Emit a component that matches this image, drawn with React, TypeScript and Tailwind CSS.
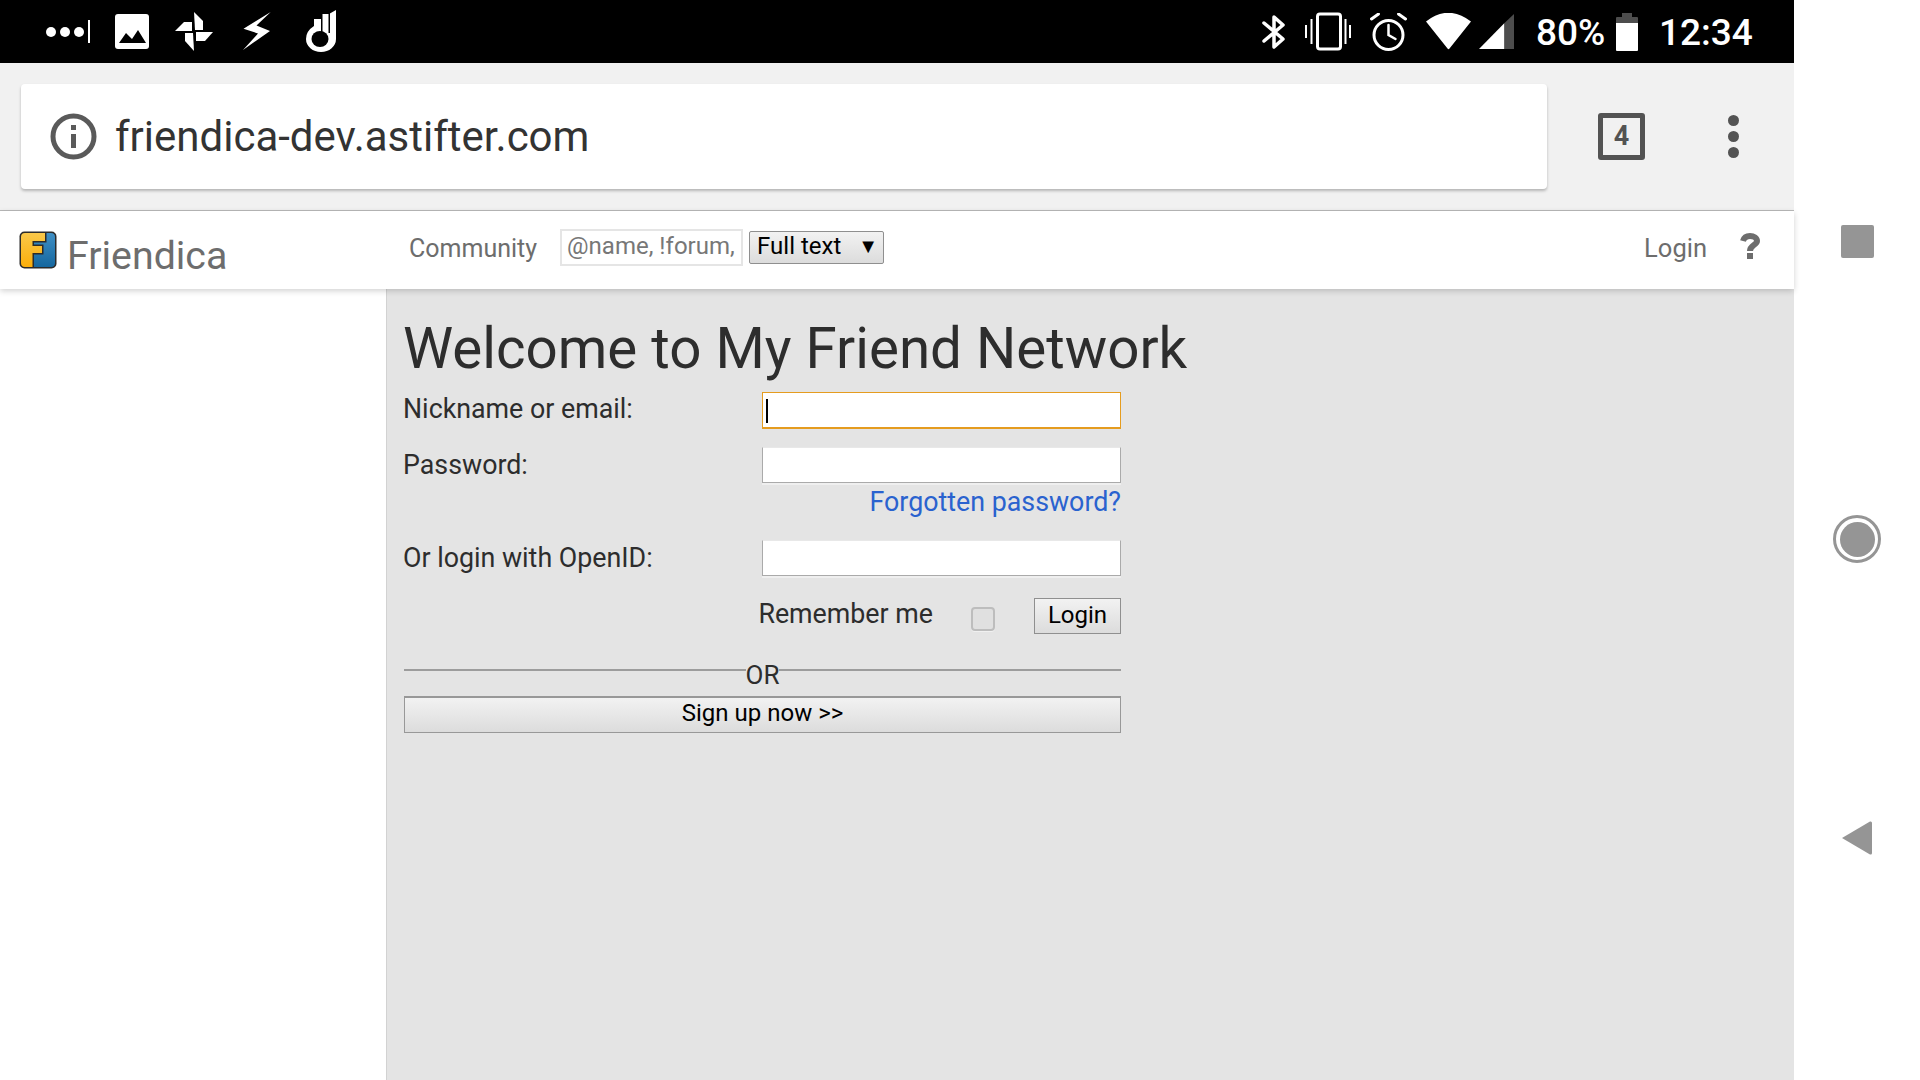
const roboto = { fontFamily: 'Roboto, "Liberation Sans", sans-serif' };

function LeftStatusIcons() {
  return (
    <div className="flex items-center pl-[46px]">
      <svg width="45" height="24" viewBox="46 20 45 24" fill="#fff">
        <circle cx="51" cy="32" r="5" />
        <circle cx="65" cy="32" r="5" />
        <circle cx="79" cy="32" r="5" />
        <rect x="88" y="20" width="2" height="23" />
      </svg>
      <svg className="ml-[24px]" width="34" height="35" viewBox="115 14 34 35">
        <rect x="115" y="14" width="34" height="35" rx="3" fill="#fff" />
        <path d="M119 43l7-10 6 6 6-9 8 13z" fill="#000" />
      </svg>
      <svg className="ml-[26px]" width="39" height="40" viewBox="175 12 39 40" fill="#fff">
        <polygon points="194,12 203,21 203,30 195,30" />
        <polygon points="175,31 184,22 192,22 192,31" />
        <polygon points="196,32 213,32 205,41 196,41" />
        <polygon points="185,33 193,33 194,51 185,41" />
      </svg>
      <svg className="ml-[29px]" width="28" height="39" viewBox="243 13 28 39" fill="#fff">
        <polygon points="270.700,13 243.500,29.700 258,34.500 243,51 270,32 256.500,26.500" />
      </svg>
      <svg className="ml-[35px]" width="31" height="43" viewBox="306 11 31 43">
        <path d="M329 15L336 11V40A15 13 0 0 1 306 40Q306 32 314 27V20H321V15Z" fill="#fff" />
        <ellipse cx="320" cy="40" rx="8.500" ry="8" fill="#000" />
        <rect x="321" y="14" width="1.500" height="20" fill="#000" />
        <rect x="328.500" y="10" width="1.500" height="24" fill="#000" />
      </svg>
    </div>
  );
}

function RightStatusIcons() {
  return (
    <div className="flex items-center pr-[37px]">
      <svg width="24" height="34" viewBox="1263 17 24 34" fill="none" stroke="#fff" strokeWidth="3.5" strokeLinecap="round" strokeLinejoin="round">
        <path d="M1265 25l19 16-9 8V19l9 8-19 16" />
      </svg>
      <svg className="ml-[18px]" width="47" height="40" viewBox="1306 12 47 40" fill="none" stroke="#fff" strokeWidth="3">
        <rect x="1319.500" y="14" width="23" height="35" rx="2.500" />
        <path d="M1308 25v13M1313.500 19v25M1347.500 19v25M1352 25v13" strokeWidth="2" />
      </svg>
      <svg className="ml-[19px]" width="38" height="38" viewBox="1372 13 38 38" fill="none" stroke="#fff" strokeWidth="3" strokeLinecap="round">
        <circle cx="1390.500" cy="35" r="14.500" />
        <path d="M1373.500 19l7-5M1400.500 14l7 5" />
        <path d="M1390.500 25v10l7 4" strokeWidth="2.500" />
      </svg>
      <svg className="ml-[18px]" width="46" height="37" viewBox="1428 13 46 37" fill="#fff">
        <path d="M1428 21.500Q1450 4 1473 21.500L1451.500 48.500Q1450.500 50 1449.500 48.500Z" />
      </svg>
      <svg className="ml-[7px]" width="36" height="36" viewBox="1481 15 36 36">
        <polygon points="1481,50 1506.500,24 1506.500,50" fill="#fff" />
        <polygon points="1506.500,24 1516,15 1516,50 1506.500,50" fill="#4d4d4d" />
      </svg>
      <span className="mt-[2px] ml-[21px] w-[67px] text-[37px] leading-none font-medium text-white" style={roboto}>80%</span>
      <div className="ml-[13px] flex w-[22px] flex-col items-center">
        <div className="h-[4px] w-[10px] bg-[#4d4d4d]" />
        <div className="h-[6px] w-full rounded-t-[1px] bg-[#4d4d4d]" />
        <div className="h-[28px] w-full rounded-b-[1px] bg-white" />
      </div>
      <span className="mt-[2px] ml-[21px] w-[98px] pr-[6px] text-[37px] leading-none font-medium text-white" style={roboto}>12:34</span>
    </div>
  );
}

function Logo() {
  return (
    <svg width="38" height="38" viewBox="0 0 38 38">
      <defs>
        <linearGradient id="logoYellow" x1="0" y1="0" x2="0" y2="1">
          <stop offset="0" stopColor="#f9c84a" />
          <stop offset="1" stopColor="#fbae0a" />
        </linearGradient>
        <linearGradient id="logoBlue" x1="0" y1="0" x2="0" y2="1">
          <stop offset="0" stopColor="#3f8fc4" />
          <stop offset="1" stopColor="#15679f" />
        </linearGradient>
      </defs>
      <rect x="0.500" y="0.500" width="37" height="37" rx="5" fill="#2b2b2b" />
      <path d="M6 2H26V10H13.500V15H23V22H13.500V36H6A4 4 0 0 1 2 32V6A4 4 0 0 1 6 2Z" fill="url(#logoYellow)" />
      <path d="M27.500 2H32A4 4 0 0 1 36 6V32A4 4 0 0 1 32 36H15V23.500H24.500V13.500H15V11.500H27.500Z" fill="url(#logoBlue)" />
    </svg>
  );
}

function Field({ label, focused }: { label: string; focused?: boolean }) {
  return (
    <div className="flex items-center">
      <label className={focused ? 'w-[359px] pb-[2px] text-[26.800px] leading-none text-[#2d2d2d]' : 'w-[359px] text-[26.800px] leading-none text-[#2d2d2d]'}>{label}</label>
      <div className="relative">
        <input
          readOnly
          className={
            focused
              ? 'block h-[37px] w-[359px] border border-b-2 border-[#e59c1f] bg-white'
              : 'block h-[36px] w-[359px] border border-[#aaaaaa] border-t-[#e8e8e8] bg-white shadow-[0_2px_0_#efefef]'
          }
        />
        {focused && <span className="absolute top-[7px] left-[4px] h-[24px] w-[2px] bg-black" />}
      </div>
    </div>
  );
}

export default function App() {
  return (
    <div className="flex h-[1080px] w-[1920px] overflow-hidden bg-white" style={roboto}>
      <div className="flex w-[1794px] flex-col">
        {/* barra de estado */}
        <div className="flex h-[63px] items-center justify-between bg-black">
          <LeftStatusIcons />
          <RightStatusIcons />
        </div>

        {/* barra del navegador */}
        <div className="flex h-[148px] items-center border-b border-[#b9b9b9] bg-[#f1f1f1] pl-[21px]">
          <div className="flex h-[105px] w-[1526px] items-center rounded-[4px] bg-white pl-[29px] shadow-[0_2px_3px_rgba(0,0,0,0.25)]">
            <svg width="47" height="47" viewBox="0 0 47 47" fill="none">
              <circle cx="23.500" cy="23.500" r="20.500" stroke="#5a5a5a" strokeWidth="5" />
              <rect x="21" y="21" width="5" height="14" fill="#5a5a5a" />
              <rect x="21" y="12" width="5" height="5" fill="#5a5a5a" />
            </svg>
            <span className="ml-[18px] text-[42px] leading-none text-[#333333]">friendica-dev.astifter.com</span>
          </div>
          <div className="ml-[51px] flex h-[47px] w-[47px] items-center justify-center rounded-[3px] border-[5px] border-[#535353] text-[27px] leading-none font-bold text-[#535353]">
            4
          </div>
          <div className="ml-[83px] flex flex-col gap-[5px]">
            <span className="h-[11px] w-[11px] rounded-full bg-[#535353]" />
            <span className="h-[11px] w-[11px] rounded-full bg-[#535353]" />
            <span className="h-[11px] w-[11px] rounded-full bg-[#535353]" />
          </div>
        </div>

        {/* navegación del sitio */}
        <div className="relative z-10 flex h-[78px] items-center bg-white pr-[34px] shadow-[0_2px_6px_rgba(0,0,0,0.18)]">
          <div className="flex w-[409px] items-center pl-[19px]">
            <Logo />
            <span className="mt-[14px] ml-[10px] text-[39.300px] leading-none text-[#6d6d6d]">Friendica</span>
          </div>
          <span className="mt-[-3px] text-[25px] leading-none text-[#6d6d6d]">Community</span>
          <div className="mt-[-5px] ml-[23px] flex h-[37px] w-[183px] items-center overflow-hidden border-2 border-[#e5e5e5] pb-[4px] pl-[5px] text-[24px] whitespace-nowrap text-[#777777]">
            @name, !forum,
          </div>
          <div className="mt-[-5px] ml-[6px] flex h-[33px] w-[135px] items-center justify-between rounded-[2px] border border-[#8f8f8f] bg-gradient-to-b from-[#f2f2f2] to-[#dcdcdc] pr-[5px] pb-[4px] pl-[7px] text-[24px] leading-none text-black">
            <span>Full text</span>
            <span className="text-[20px]">▼</span>
          </div>
          <span className="mt-[-3px] ml-auto text-[25.500px] leading-none text-[#6d6d6d]">Login</span>
          <svg className="mt-[-9px] ml-[33px]" width="20" height="26" viewBox="0 0 20 26" fill="none">
            <path d="M3 8C4 4.500 7 3 10 3C14 3 17 5 17 8C17 12 10 12 10 18" stroke="#6d6d6d" strokeWidth="6" />
            <rect x="7" y="20" width="6" height="6" fill="#6d6d6d" />
          </svg>
        </div>

        {/* contenido */}
        <div className="flex flex-1">
          <div className="w-[386px] bg-white" />
          <main className="flex-1 border-l border-[#d2d2d2] bg-[#e4e4e4] pt-[27px] pl-[16px]">
            <h1 className="text-[56.500px] leading-[66px] font-normal text-[#2d2d2d]">Welcome to My Friend Network</h1>
            <div className="flex w-[718px] flex-col">
              <div className="mt-[10px] flex flex-col gap-[18px]">
                <Field label="Nickname or email:" focused />
                <Field label="Password:" />
              </div>
              <a className="mt-[3px] self-end text-[26.800px] leading-[33px] text-[#2a62cf]">Forgotten password?</a>
              <div className="mt-[21px]">
                <Field label="Or login with OpenID:" />
              </div>
              <div className="mt-[22px] flex items-center justify-end">
                <span className="mt-[-4px] text-[26.800px] leading-none text-[#2d2d2d]">Remember me</span>
                <span className="mt-[6px] ml-[38px] h-[24px] w-[24px] rounded-[4px] border-2 border-[#bdbdbd] bg-[#e0e0e0] shadow-[0_1px_0_#f0f0f0]" />
                <button className="ml-[39px] h-[36px] w-[87px] border border-[#8f8f8f] bg-gradient-to-b from-[#f2f2f2] to-[#dcdcdc] pb-[3px] text-[24px] leading-none text-black">
                  Login
                </button>
              </div>
              <div className="mt-[26px] ml-[1px] flex items-start">
                <div className="mt-[9px] h-[2px] flex-1 bg-[#9c9c9c]" />
                <span className="mt-[1px] text-[26px] leading-[29px] text-[#2d2d2d]">OR</span>
                <div className="mt-[9px] h-[2px] flex-1 bg-[#9c9c9c]" />
              </div>
              <button className="mt-[6px] ml-[1px] h-[37px] border border-t-2 border-[#989898] bg-gradient-to-b from-[#f2f2f2] to-[#dcdcdc] pb-[5px] text-[24px] leading-none text-black">
                Sign up now &gt;&gt;
              </button>
            </div>
          </main>
        </div>
      </div>

      {/* navegación de android */}
      <div className="flex w-[126px] flex-col items-center pt-[225px]">
        <div className="h-[33px] w-[33px] rounded-[2px] bg-[#959595]" />
        <div className="mt-[257px] flex h-[48px] w-[48px] items-center justify-center rounded-full border-[3px] border-[#959595]">
          <div className="h-[35px] w-[35px] rounded-full bg-[#959595]" />
        </div>
        <svg className="mt-[257px]" width="32" height="36" viewBox="0 0 32 36">
          <path d="M1 18L29 1.500Q31 1 31 3V33Q31 35 29 34.500Z" fill="#959595" />
        </svg>
      </div>
    </div>
  );
}
